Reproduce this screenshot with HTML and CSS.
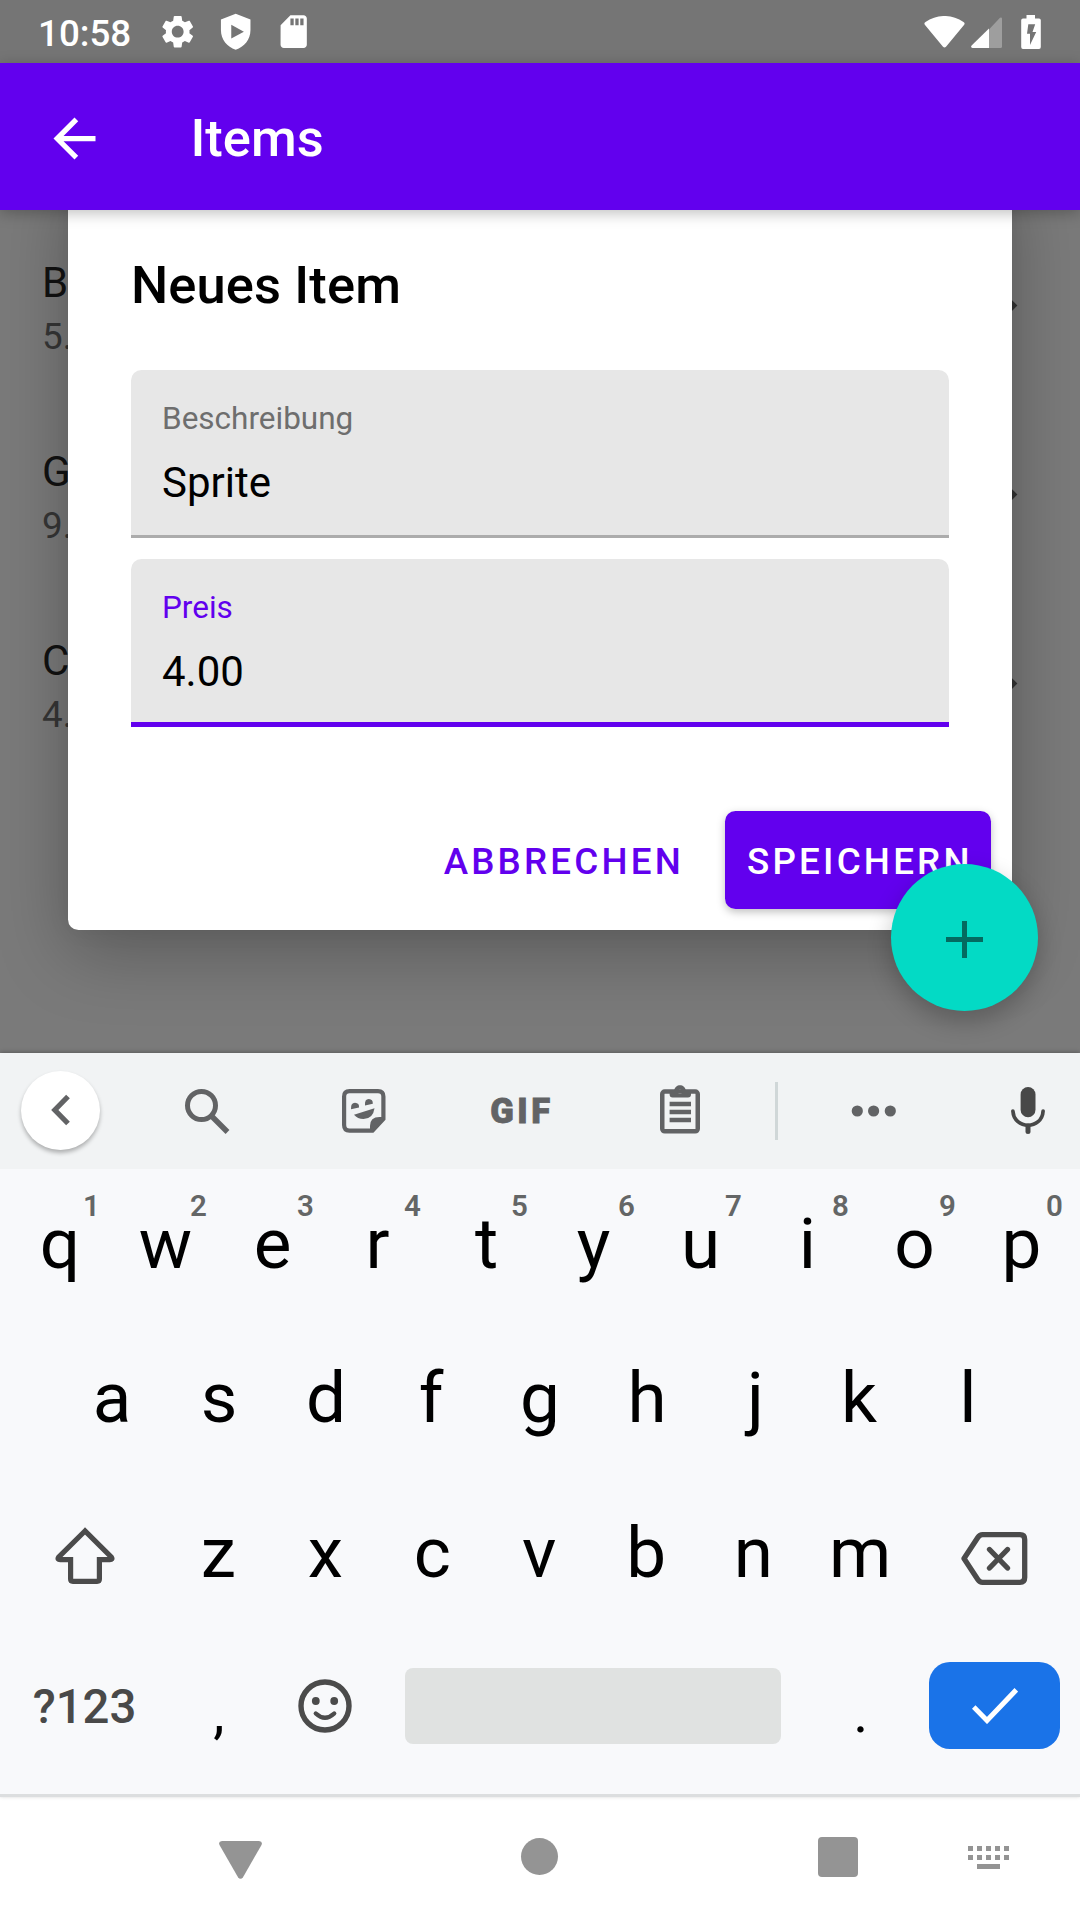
FILE: index.html
```html
<!DOCTYPE html>
<html lang="de">
<head>
<meta charset="utf-8">
<title>Items</title>
<link rel="stylesheet" href="styles.css">
</head>
<body>
<div class="screen">
  <header class="status">
    <span class="clock">10:58</span>
    <div class="status-left">
      <svg class="status-icon" viewBox="0 0 24 24"><path fill="#fff" d="M19.14 12.94c.04-.3.06-.61.06-.94 0-.32-.02-.64-.07-.94l2.03-1.58c.18-.14.23-.41.12-.61l-1.92-3.32c-.12-.22-.37-.29-.59-.22l-2.39.96c-.5-.38-1.03-.7-1.62-.94L14.4 2.81c-.04-.24-.24-.41-.48-.41h-3.84c-.24 0-.43.17-.47.41L9.25 5.35c-.59.24-1.13.57-1.62.94L5.24 5.33c-.22-.08-.47 0-.59.22L2.74 8.87c-.12.21-.08.47.12.61l2.03 1.58c-.05.3-.09.63-.09.94s.02.64.07.94l-2.03 1.58c-.18.14-.23.41-.12.61l1.92 3.32c.12.22.37.29.59.22l2.39-.96c.5.38 1.03.7 1.62.94l.36 2.54c.05.24.24.41.48.41h3.84c.24 0 .44-.17.47-.41l.36-2.54c.59-.24 1.13-.56 1.62-.94l2.39.96c.22.08.47 0 .59-.22l1.92-3.32c.12-.22.07-.47-.12-.61l-2.01-1.58zM12 15.6c-1.98 0-3.6-1.62-3.6-3.6s1.62-3.6 3.6-3.6 3.6 1.62 3.6 3.6-1.62 3.6-3.6 3.6z"/></svg>
      <svg class="status-icon" viewBox="0 0 24 24"><path fill="#fff" fill-rule="evenodd" d="M12 1 3 4.5V11c0 5.8 3.8 10.4 9 12 5.200-1.600 9-6.200 9-12V4.500zM9.300 7.800 17 12l-7.700 4.200z"/></svg>
      <svg class="status-icon" viewBox="0 0 24 24"><path fill="#fff" fill-rule="evenodd" d="M18 2h-8L4.020 8 4 20c0 1.100.9 2 2 2h12c1.100 0 2-.9 2-2V4c0-1.100-.9-2-2-2zm-6 6h-2V4h2v4zm3 0h-2V4h2v4zm3 0h-2V4h2v4z"/></svg>
    </div>
    <div class="status-right">
      <svg width="41" height="32" viewBox="0 0 41 32"><path fill="#fff" d="M.8 8.800Q-.3 7 1.500 5.900C13-2 28-2 39.500 5.900Q41.300 7 40.200 8.800L22 30.800Q20.500 32.400 19 30.800z"/></svg>
      <svg width="31" height="31" viewBox="0 0 31 31"><path fill="#fff" fill-opacity=".3" d="M18 12.500 29 .8Q31 0 31 2V29.500Q31 31 29.500 31H18z"/><path fill="#fff" d="M18 11.500V31H1.500Q-.8 30.500.6 28.500z"/></svg>
      <svg class="battery" width="20" height="34" viewBox="0 0 20 34"><path fill="#fff" fill-rule="evenodd" d="M5.500 0h8.500v3.500h4q1.800 0 1.800 1.800V32q0 1.900-1.800 1.900H2Q.2 33.900.2 32V5.300Q.2 3.500 2 3.500h3.500zM7.300 9.200 6 18.800h3V30l6.200-13H11.500l2.700-7.800z"/></svg>
    </div>
  </header>

  <div class="appbar">
    <svg class="back" viewBox="0 0 24 24"><path fill="#fff" d="M20 11H7.830l5.590-5.590L12 4l-8 8 8 8 1.410-1.410L7.830 13H20v-2z"/></svg>
    <h1 class="appbar-title">Items</h1>
  </div>

  <main class="content">
    <ul class="list">
      <li class="row"><div class="row-text"><span class="row-name">B</span><span class="row-price">5.</span></div><svg class="row-arrow" viewBox="0 0 24 24"><path fill="#333" d="M10 17l5-5-5-5z"/></svg></li>
      <li class="row"><div class="row-text"><span class="row-name">G</span><span class="row-price">9.</span></div><svg class="row-arrow" viewBox="0 0 24 24"><path fill="#333" d="M10 17l5-5-5-5z"/></svg></li>
      <li class="row"><div class="row-text"><span class="row-name">C</span><span class="row-price">4.</span></div><svg class="row-arrow" viewBox="0 0 24 24"><path fill="#333" d="M10 17l5-5-5-5z"/></svg></li>
    </ul>
    <section class="dialog">
      <h2 class="dialog-title">Neues Item</h2>
      <div class="fields">
        <div class="field"><span class="field-label">Beschreibung</span><span class="field-value">Sprite</span></div>
        <div class="field field-active"><span class="field-label">Preis</span><span class="field-value">4.00</span></div>
      </div>
      <div class="actions">
        <button class="btn btn-text">ABBRECHEN</button>
        <button class="btn btn-filled">SPEICHERN</button>
      </div>
    </section>
    <button class="fab" aria-label="Hinzufügen"><svg width="37" height="37" viewBox="0 0 37 37"><path fill="#046a60" d="M16 0h5v16h16v5H21v16h-5V21H0v-5h16z"/></svg></button>
  </main>

  <section class="keyboard">
    <div class="toolbar">
      <div class="tool"><span class="collapse"><svg width="20" height="32" viewBox="0 0 20 32"><path fill="none" stroke="#626365" stroke-width="5.200" d="M17 2.500 3.800 16 17 29.500"/></svg></span></div>
      <div class="tool"><svg width="45" height="45" viewBox="0 0 45 45"><g fill="none" stroke="#626365"><circle cx="16.500" cy="16.500" r="14" stroke-width="5"/><path stroke-width="5.400" d="m26.500 27 16 16"/></g></svg></div>
      <div class="tool"><svg width="44" height="44" viewBox="0 0 44 44"><path fill="none" stroke="#626365" stroke-width="4.200" d="M7.500 2.100H36q5.400 0 5.400 5.400V30L30.500 41.600h-23Q2.100 41.600 2.100 36V7.500Q2.100 2.100 7.500 2.100z"/><g fill="#626365"><path d="M28 41v-4q0-9 9.500-9H42v2.500L30.500 42z"/><path d="M9 20.200Q8.500 13.800 13 13.700q4.500.4 4 4.700z"/><path d="M23 16.400Q22.500 10 26.800 10q4.300.4 4 4.700z"/><path d="M12 25.800 32.500 19.300Q31 30 21.500 30 15.500 30 12 25.800z"/></g></svg></div>
      <div class="tool"><span class="gif">GIF</span></div>
      <div class="tool"><svg class="clip" width="40" height="49" viewBox="0 0 40 49"><rect x="2.250" y="6.500" width="35.500" height="39.800" rx="2.500" fill="none" stroke="#626365" stroke-width="4.500"/><path fill="#626365" fill-rule="evenodd" d="M9.600 6H14C15-1.800 25-1.800 26 6h5v3.500q0 3-3 3H12.600q-3 0-3-3zM20 4.500a2.200 2.200 0 1 0 0 4.400 2.200 2.200 0 0 0 0-4.400zM9.600 16.700H31v4.600H9.600zM9.600 24.700H31v4.500H9.600zM9.600 32.700H31v4.500H9.600z"/></svg></div>
      <div class="tool"><span class="divider"></span></div>
      <div class="tool tool-more"><svg width="46" height="12" viewBox="0 0 46 12"><g fill="#626365"><circle cx="6.300" cy="6" r="5.600"/><circle cx="22.600" cy="6" r="5.600"/><circle cx="39.300" cy="6" r="5.600"/></g></svg></div>
      <div class="tool"><svg width="34" height="48" viewBox="0 0 34 48"><rect x="9.600" y="0" width="14.900" height="30.200" rx="7.400" fill="#484848"/><path fill="none" stroke="#484848" stroke-width="3.700" stroke-linecap="round" d="M1.900 24c1 19 29.200 19 30.200 0"/><path stroke="#484848" stroke-width="5" stroke-linecap="round" d="M17 39v5.500"/></svg></div>
    </div>

    <div class="keys">
      <div class="krow krow-q">
        <span class="key key-nudge-right">q<sup class="hint">1</sup></span><span class="key">w<sup class="hint">2</sup></span><span class="key">e<sup class="hint">3</sup></span><span class="key key-nudge-left">r<sup class="hint">4</sup></span><span class="key">t<sup class="hint">5</sup></span><span class="key">y<sup class="hint">6</sup></span><span class="key">u<sup class="hint">7</sup></span><span class="key">i<sup class="hint">8</sup></span><span class="key">o<sup class="hint">9</sup></span><span class="key">p<sup class="hint">0</sup></span>
      </div>
      <div class="krow krow-a">
        <span class="key">a</span><span class="key">s</span><span class="key">d</span><span class="key key-nudge-left">f</span><span class="key">g</span><span class="key">h</span><span class="key key-nudge-right">j</span><span class="key key-nudge-left">k</span><span class="key">l</span>
      </div>
      <div class="krow krow-z">
        <span class="key key-wide key-shift"><svg width="60" height="58" viewBox="0 0 60 58"><path fill="none" stroke="#4b4b4b" stroke-width="5.200" d="M30 4 3.600 30.200Q2 32.600 5.200 32.600H15.600V52q0 2.300 2.300 2.300H42.100q2.300 0 2.300-2.300V32.600H54.800Q58 32.600 56.400 30.200z"/></svg></span>
        <span class="key">z</span><span class="key">x</span><span class="key">c</span><span class="key">v</span><span class="key">b</span><span class="key">n</span><span class="key">m</span>
        <span class="key key-wide key-del"><svg width="67" height="53" viewBox="0 0 67 53"><path fill="none" stroke="#4b4b4b" stroke-width="5.300" stroke-linejoin="round" d="M3 26.500 16.800 5.500Q18.700 2.700 21.500 2.700H59q4.700 0 4.700 4.700V45.600q0 4.700-4.700 4.700H21.500q-2.800 0-4.700-2.800z"/><path stroke="#4b4b4b" stroke-width="5.300" stroke-linecap="round" d="m28.500 17.500 18 18.500m0-18.500L28.500 36"/></svg></span>
      </div>
      <div class="krow krow-space">
        <span class="key key-wide key-sym">?123</span>
        <span class="key key-punct">,</span>
        <span class="key"><svg width="54" height="54" viewBox="0 0 54 54"><circle cx="27" cy="27" r="24" fill="none" stroke="#4b4b4b" stroke-width="5.400"/><circle cx="17.800" cy="22" r="3.900" fill="#4b4b4b"/><circle cx="36.200" cy="22" r="3.900" fill="#4b4b4b"/><path fill="none" stroke="#4b4b4b" stroke-width="4.400" stroke-linecap="round" d="M17.800 34.500q9.200 8.500 18.400 0"/></svg></span>
        <span class="key key-space"><span class="spacebar"></span></span>
        <span class="key key-punct">.</span>
        <span class="key key-wide key-enter"><span class="enter"><svg width="46" height="36" viewBox="0 0 46 36"><path fill="none" stroke="#fff" stroke-width="5" d="M1.700 19 15 32.500 44.300 1.800"/></svg></span></span>
      </div>
    </div>
  </section>

  <nav class="navbar">
    <svg class="nav-back" width="43" height="38" viewBox="0 0 43 38"><path fill="#949494" d="M3 0H40q4 .5 2.500 4L24 36.200q-2.500 3.200-5 0L.5 4Q-1 .5 3 0z"/></svg>
    <span class="nav-home"></span>
    <span class="nav-recent"></span>
    <svg class="nav-ime" width="41" height="24" viewBox="0 0 41 24"><path fill="#949494" d="M0 0h5v5H0zM9 0h5v5H9zM18 0h5v5h-5zM27 0h5v5h-5zM36 0h5v5h-5zM0 9h5v5H0zM9 9h5v5H9zM18 9h5v5h-5zM27 9h5v5h-5zM36 9h5v5h-5zM9 18h23v5H9z"/></svg>
  </nav>
</div>
</body>
</html>
```

FILE: styles.css
```css
* { box-sizing: border-box; }
body { margin: 0; font-family: Roboto, "Noto Sans", sans-serif; color: #000; }
svg { display: block; flex: none; }
button { font: inherit; border: 0; margin: 0; }
h1, h2, ul { margin: 0; padding: 0; }
h1, h2 { font-weight: 500; }

.screen { width: 1080px; height: 1920px; display: flex; flex-direction: column; overflow: hidden; }

/* Status bar */
.status { height: 63px; background: #757575; display: flex; align-items: center; padding: 1px 39px 0 38px; flex: none; }
.clock { color: #fff; font-size: 36.75px; font-weight: 500; line-height: 43px; width: 120.300px; padding-top: 2px; }
.status-left { display: flex; gap: 18.600px; }
.status-icon { width: 39.400px; height: 39.400px; }
.status-right { display: flex; margin-left: auto; gap: 6px; align-items: center; }
.battery { margin-left: 13.500px; }

/* App bar */
.appbar { height: 147px; background: #6200ee; display: flex; align-items: center; padding-left: 42.500px; flex: none; position: relative; z-index: 2; box-shadow: 0 3px 14px rgba(0,0,0,.26); }
.back { width: 63px; height: 63px; margin-top: 3px; }
.appbar-title { margin-left: 85px; color: #fff; font-size: 52.500px; line-height: 62px; padding-top: 3px; }

/* Dimmed list with the dialog over it */
.content { height: 843px; background: #7a7a7a; position: relative; overflow: hidden; flex: none; }
.list { list-style: none; padding-top: 1px; }
.row { height: 189px; padding: 0 39px 0 42px; display: flex; justify-content: space-between; align-items: center; }
.row-text { display: flex; flex-direction: column; margin-top: 8px; }
.row-name { font-size: 42px; line-height: 50px; color: #121212; }
.row-price { font-size: 36.750px; line-height: 50px; margin-top: 4px; color: #363636; }
.row-arrow { width: 63px; height: 63px; }

.dialog { position: absolute; left: 68px; top: -40px; width: 944px; height: 760px; background: #fff; border-radius: 10.500px; padding: 84px 63px 21px; box-shadow: 0 22px 70px rgba(0,0,0,.26), 0 0 24px rgba(0,0,0,.06); display: flex; flex-direction: column; }
.dialog-title { font-size: 52.500px; line-height: 62px; letter-spacing: .1px; }
.fields { display: flex; flex-direction: column; gap: 21px; margin-top: 54px; }
.field { height: 168px; background: #e7e7e7; border-radius: 10.500px 10.500px 0 0; border-bottom: 3.500px solid #acacac; padding: 30px 31px 0; display: flex; flex-direction: column; }
.field-label { font-size: 31.500px; line-height: 37px; color: #6e6e6e; }
.field-value { font-size: 42px; line-height: 50px; margin-top: 21px; }
.field-active { border-bottom: 5px solid #6200ee; }
.field-active .field-label { color: #6200ee; }
.actions { display: flex; justify-content: flex-end; gap: 21px; margin: auto -42px 0; }
.btn { height: 98px; padding: 3px 20px 0 21px; border-radius: 10.500px; font-size: 36.750px; font-weight: 500; letter-spacing: 3.200px; white-space: nowrap; }
.btn-text { background: none; color: #6200ee; }
.btn-filled { width: 266px; padding-left: 22px; background: #6200ee; color: #fff; box-shadow: 0 3px 8px rgba(0,0,0,.25); }
.fab { position: absolute; left: 891px; top: 654px; width: 147px; height: 147px; border-radius: 50%; background: #03dac5; padding: 4px 0 0; display: flex; align-items: center; justify-content: center; box-shadow: 0 10px 24px rgba(0,0,0,.24); }

/* Keyboard */
.keyboard { height: 744px; flex: none; display: flex; flex-direction: column; background: #f8f9fb; border-bottom: 3px solid #dcdedf; position: relative; z-index: 1; box-shadow: 0 -1px 4px rgba(0,0,0,.25); }
.toolbar { height: 116px; background: #f1f3f4; display: grid; grid-template-columns: 121px 172px 141px 173px 146px 47px 176px 104px; align-items: center; }
.tool { display: flex; align-items: center; justify-content: center; }
.tool-more { padding-right: 28px; }
.collapse { width: 79px; height: 79px; border-radius: 50%; background: #fff; display: flex; align-items: center; justify-content: center; margin-bottom: 2px; box-shadow: 0 3px 4px rgba(0,0,0,.28); }
.gif { font-size: 34.500px; line-height: 40px; font-weight: 900; letter-spacing: 3.600px; padding-left: 3px; color: #626365; -webkit-text-stroke: .8px #626365; }
.clip { margin-bottom: 4px; }
.divider { width: 3px; height: 58px; background: #d0d7d8; }

.krow { display: flex; justify-content: center; }
.krow-q { height: 150px; }
.krow-a { height: 158px; }
.krow-z { height: 152px; padding-right: 1.500px; }
.krow-space { height: 153px; padding-right: 1.500px; }
.key { width: 107px; flex: none; display: flex; align-items: center; justify-content: center; position: relative; font-size: 71px; line-height: 84px; }
.key-nudge-left { padding-right: 4px; }
.key-nudge-right { padding-left: 3px; }
.key-wide { width: 160.500px; }
.key-space { width: 428px; }
.hint { position: absolute; left: 72.500px; top: 20px; width: 28px; text-align: center; font-size: 29.500px; line-height: 35px; font-weight: 600; color: #646666; }
.key-shift { padding: 5px 0 0 1px; }
.key-del { padding-top: 11px; }
.key-sym { font-size: 47.300px; font-weight: 500; color: #494949; padding-top: 2px; }
.key-punct { font-size: 57px; padding: 14px 0 0 1px; }
.key-enter { padding-left: 1.500px; }
.spacebar { width: 376px; height: 76px; border-radius: 8px; background: #e0e2e1; }
.enter { width: 131px; height: 87px; border-radius: 21px; background: #1a73e8; display: flex; align-items: center; justify-content: center; }

/* System navigation */
.navbar { height: 123px; background: #fff; display: flex; align-items: center; padding-left: 219px; flex: none; }
.nav-back { margin-top: 2px; }
.nav-home { width: 37px; height: 37px; border-radius: 50%; background: #949494; margin: -4px 0 0 259px; }
.nav-recent { width: 40px; height: 40px; border-radius: 4px; background: #949494; margin: -3px 0 0 260px; }
.nav-ime { margin: -1px 0 0 110px; }
```
